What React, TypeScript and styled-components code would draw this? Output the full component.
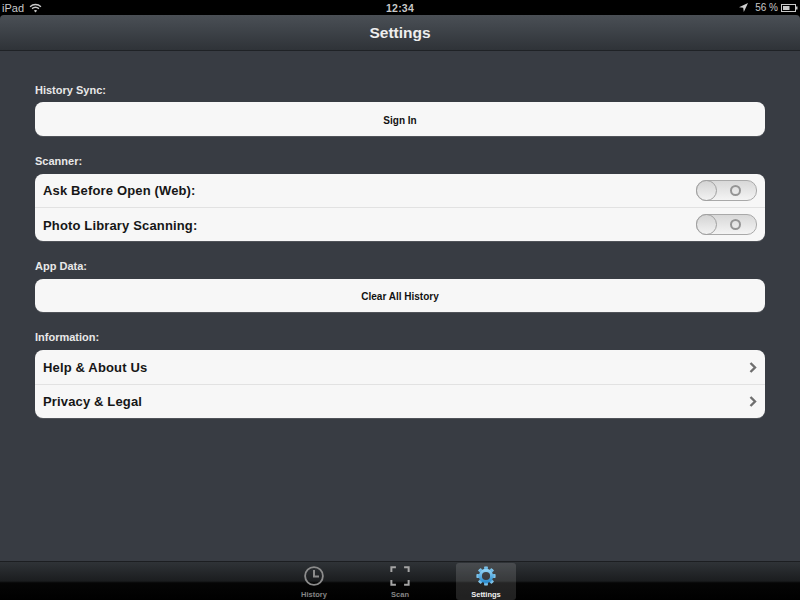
import React from "react";
import styled, { createGlobalStyle } from "styled-components";

const Global = createGlobalStyle`
  html, body { margin: 0; padding: 0; background: #000; }
  body { font-family: "Liberation Sans", Arial, sans-serif; }
`;

const Screen = styled.div`
  width: 800px;
  height: 600px;
  display: flex;
  flex-direction: column;
  overflow: hidden;
  background: #383c43;
`;

const StatusBar = styled.div`
  height: 15px;
  flex: none;
  background: #000;
  color: #c9c9c9;
  display: grid;
  grid-template-columns: 1fr auto 1fr;
  align-items: center;
  font-size: 11px;
  padding: 0 2px;
`;

const StatusLeft = styled.div`
  display: flex;
  align-items: center;
  gap: 5px;
`;

const StatusRight = styled.div`
  display: flex;
  align-items: center;
  justify-content: flex-end;
`;

const Percent = styled.span`
  font-size: 10px;
  margin: 0 3px 0 7px;
`;

const Clock = styled.div`
  font-weight: 700;
  font-size: 10.5px;
  letter-spacing: 0.2px;
`;

const NavCorners = styled.div`
  background: #000;
  flex: none;
`;

const NavBar = styled.div`
  height: 35px;
  border-radius: 4px 4px 0 0;
  background: linear-gradient(#4a4f55, #42474d 30%, #2f3338);
  border-bottom: 1px solid #1f2226;
  display: flex;
  align-items: center;
  justify-content: center;
  color: #eeeeee;
  font-size: 15.5px;
  font-weight: 700;
`;

const Content = styled.div`
  flex: 1;
  padding: 32px 35px 0;
  display: flex;
  flex-direction: column;
`;

const SectionLabel = styled.div<{ $first?: boolean }>`
  height: 14px;
  line-height: 14px;
  color: #e8e8e8;
  font-size: 11px;
  font-weight: 700;
  margin-bottom: ${(p) => (p.$first ? 5 : 6)}px;
`;

const Card = styled.div`
  background: #f7f7f7;
  border-radius: 8px;
  margin-bottom: 18px;
  overflow: hidden;
  box-shadow: 0 1px 0 rgba(255, 255, 255, 0.12);
`;

const ActionRow = styled.div<{ $h: number }>`
  height: ${(p) => p.$h}px;
  box-sizing: border-box;
  padding-top: 2px;
  display: flex;
  align-items: center;
  justify-content: center;
  color: #111;
  font-size: 10px;
  font-weight: 700;
`;

const Row = styled.div<{ $h: number; $line: string }>`
  height: ${(p) => p.$h}px;
  box-sizing: border-box;
  padding: 0 8px;
  display: flex;
  align-items: center;
  justify-content: space-between;
  color: #161616;
  font-size: 13px;
  font-weight: 700;
  letter-spacing: 0.15px;
  & + & {
    border-top: 1px solid ${(p) => p.$line};
  }
`;

const RowText = styled.span<{ $nudge?: number }>`
  padding-top: ${(p) => p.$nudge ?? 0}px;
`;

const Toggle = styled.div`
  position: relative;
  width: 59px;
  height: 19px;
  border-radius: 10px;
  border: 1px solid #a9a9a9;
  background: linear-gradient(#d8d8d8, #f4f4f4);
`;

const Knob = styled.div`
  position: absolute;
  left: -1px;
  top: -1px;
  width: 19px;
  height: 19px;
  border-radius: 50%;
  border: 1px solid #a0a0a0;
  background: linear-gradient(#d4d4d4, #f2f2f2);
`;

const OffMark = styled.div`
  position: absolute;
  left: 33px;
  top: 4px;
  width: 7px;
  height: 7px;
  border-radius: 50%;
  border: 2px solid #959595;
`;

const TabBar = styled.div`
  height: 38px;
  flex: none;
  background: linear-gradient(#2f3337, #1b1d1f 50%, #050505 55%, #000);
  border-top: 1px solid #1c1e21;
  display: flex;
  justify-content: center;
`;

const Tab = styled.div<{ $active?: boolean }>`
  width: 60px;
  margin: 1px 13px 0;
  height: 36px;
  border-radius: 3px;
  background: ${(p) => (p.$active ? "rgba(255,255,255,0.13)" : "transparent")};
  color: ${(p) => (p.$active ? "#f2f2f2" : "#858585")};
  font-size: 7.5px;
  font-weight: 700;
  display: flex;
  flex-direction: column;
  align-items: center;
  justify-content: flex-end;
  gap: 4px;
  padding-bottom: 1px;
`;

const Wifi = () => (
  <svg width="13" height="10" viewBox="0 0 14 11" fill="none" stroke="#c9c9c9" strokeWidth="1.5">
    <path d="M1 4 C4.5 0.8 9.5 0.8 13 4" />
    <path d="M3.2 6.2 C5.5 4.3 8.5 4.3 10.8 6.2" />
    <path d="M7 10.5 L5.2 8.2 C6.3 7.4 7.7 7.4 8.8 8.2 Z" fill="#c9c9c9" stroke="none" />
  </svg>
);

const Arrow = () => (
  <svg width="9" height="9" viewBox="0 0 9 9">
    <path d="M9 0 L0 4.2 L4.2 4.8 L4.8 9 Z" fill="#d0d0d0" />
  </svg>
);

const Battery = () => (
  <svg width="17" height="8" viewBox="0 0 17 8">
    <rect x="0.5" y="0.5" width="14" height="7" fill="none" stroke="#c9c9c9" />
    <rect x="2" y="2" width="6.5" height="4" fill="#c9c9c9" />
    <rect x="15" y="2.5" width="1.5" height="3" fill="#c9c9c9" />
  </svg>
);

const Chevron = () => (
  <svg width="8" height="11" viewBox="0 0 8 11" fill="none" stroke="#6f6f6f" strokeWidth="2.4">
    <path d="M1.5 1 L6 5.5 L1.5 10" />
  </svg>
);

const ClockIcon = () => (
  <svg width="20" height="20" viewBox="0 0 22 22" fill="none" stroke="#8c8c8c" strokeWidth="2">
    <circle cx="11" cy="11" r="9.8" />
    <path d="M11 4.5 V11.5 H16.5" strokeWidth="2.2" />
  </svg>
);

const ScanIcon = () => (
  <svg width="20" height="20" viewBox="0 0 22 22" fill="none" stroke="#a5a5a5" strokeWidth="2.2">
    <path d="M1.5 6.5 V1.5 H6.5 M15.5 1.5 H20.5 V6.5 M20.5 15.5 V20.5 H15.5 M6.5 20.5 H1.5 V15.5" />
  </svg>
);

const GearIcon = () => {
  const teeth = Array.from({ length: 8 }, (_, i) => i * 45);
  return (
    <svg width="20" height="20" viewBox="0 0 22 22">
      <defs>
        <linearGradient id="gearBlue" x1="0" y1="0" x2="0" y2="1">
          <stop offset="0" stopColor="#8fd0f2" />
          <stop offset="1" stopColor="#2f8fd0" />
        </linearGradient>
      </defs>
      <g fill="url(#gearBlue)">
        {teeth.map((a) => (
          <rect key={a} x="8.9" y="0.5" width="4.2" height="5" rx="0.8" transform={`rotate(${a} 11 11)`} />
        ))}
      </g>
      <circle cx="11" cy="11" r="6.2" fill="none" stroke="url(#gearBlue)" strokeWidth="3.4" />
    </svg>
  );
};

export default function App() {
  return (
    <>
      <Global />
      <Screen>
        <StatusBar>
          <StatusLeft>
            iPad <Wifi />
          </StatusLeft>
          <Clock>12:34</Clock>
          <StatusRight>
            <Arrow />
            <Percent>56 %</Percent>
            <Battery />
          </StatusRight>
        </StatusBar>
        <NavCorners>
          <NavBar>Settings</NavBar>
        </NavCorners>
        <Content>
          <SectionLabel $first>History Sync:</SectionLabel>
          <Card>
            <ActionRow $h={34}>Sign In</ActionRow>
          </Card>
          <SectionLabel>Scanner:</SectionLabel>
          <Card>
            <Row $h={33} $line="#d0d0d0">
              <RowText>Ask Before Open (Web):</RowText>
              <Toggle>
                <Knob />
                <OffMark />
              </Toggle>
            </Row>
            <Row $h={34} $line="#d0d0d0">
              <RowText $nudge={1}>Photo Library Scanning:</RowText>
              <Toggle>
                <Knob />
                <OffMark />
              </Toggle>
            </Row>
          </Card>
          <SectionLabel>App Data:</SectionLabel>
          <Card>
            <ActionRow $h={33}>Clear All History</ActionRow>
          </Card>
          <SectionLabel>Information:</SectionLabel>
          <Card>
            <Row $h={34} $line="#e2e2e2">
              <RowText>Help &amp; About Us</RowText>
              <Chevron />
            </Row>
            <Row $h={34} $line="#e2e2e2">
              <RowText>Privacy &amp; Legal</RowText>
              <Chevron />
            </Row>
          </Card>
        </Content>
        <TabBar>
          <Tab>
            <ClockIcon />
            History
          </Tab>
          <Tab>
            <ScanIcon />
            Scan
          </Tab>
          <Tab $active>
            <GearIcon />
            Settings
          </Tab>
        </TabBar>
      </Screen>
    </>
  );
}
